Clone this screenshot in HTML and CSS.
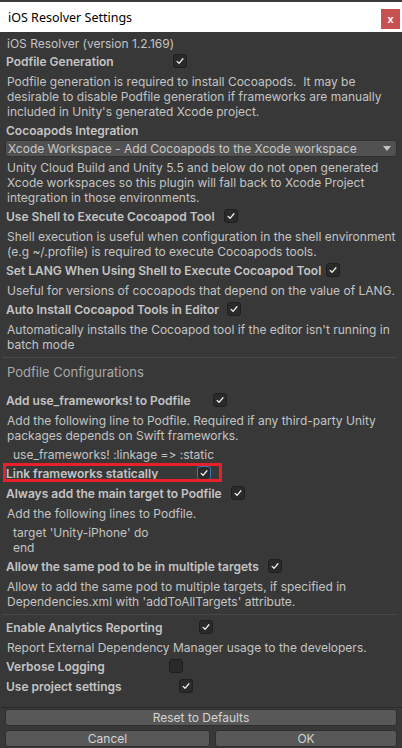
FILE: index.html
```html
<!DOCTYPE html>
<html>
<head>
<meta charset="utf-8">
<title>iOS Resolver Settings</title>
<link rel="stylesheet" href="styles.css">
</head>
<body>
<div class="window">
  <div class="topstrip"></div>
  <div class="titlebar">
    <span class="title">iOS Resolver Settings</span>
    <span class="close">x</span>
  </div>
  <div class="content">
    <div class="version">iOS Resolver (version 1.2.169)</div>

    <div class="toggle"><span class="label w-podgen">Podfile Generation</span><span class="cb on"><svg viewBox="0 0 14 14"><polyline points="3.6,7.4 5.9,9.7 10.4,4.4"/></svg></span></div>
    <div class="desc">Podfile generation is required to install Cocoapods.&nbsp; It may be<br>desirable to disable Podfile generation if frameworks are manually<br>included in Unity's generated Xcode project.</div>

    <div class="toggle"><span class="label">Cocoapods Integration</span></div>
    <div class="dropdown"><span>Xcode Workspace - Add Cocoapods to the Xcode workspace</span><span class="arrow"></span></div>
    <div class="desc">Unity Cloud Build and Unity 5.5 and below do not open generated<br>Xcode workspaces so this plugin will fall back to Xcode Project<br>integration in those environments.</div>

    <div class="toggle"><span class="label w-shell">Use Shell to Execute Cocoapod Tool</span><span class="cb on"><svg viewBox="0 0 14 14"><polyline points="3.6,7.4 5.9,9.7 10.4,4.4"/></svg></span></div>
    <div class="desc">Shell execution is useful when configuration in the shell environment<br>(e.g ~/.profile) is required to execute Cocoapods tools.</div>

    <div class="toggle"><span class="label w-lang">Set LANG When Using Shell to Execute Cocoapod Tool</span><span class="cb on"><svg viewBox="0 0 14 14"><polyline points="3.6,7.4 5.9,9.7 10.4,4.4"/></svg></span></div>
    <div class="desc">Useful for versions of cocoapods that depend on the value of LANG.</div>

    <div class="toggle"><span class="label w-auto">Auto Install Cocoapod Tools in Editor</span><span class="cb on"><svg viewBox="0 0 14 14"><polyline points="3.6,7.4 5.9,9.7 10.4,4.4"/></svg></span></div>
    <div class="desc">Automatically installs the Cocoapod tool if the editor isn't running in<br>batch mode</div>

    <div class="separator"></div>
    <div class="section-title">Podfile Configurations</div>

    <div class="toggle"><span class="label w-usefw">Add use_frameworks! to Podfile</span><span class="cb on"><svg viewBox="0 0 14 14"><polyline points="3.6,7.4 5.9,9.7 10.4,4.4"/></svg></span></div>
    <div class="desc">Add the following line to Podfile. Required if any third-party Unity<br>packages depends on Swift frameworks.</div>
    <div class="code">use_frameworks! :linkage =&gt; :static</div>

    <div class="toggle highlighted"><span class="label w-link">Link frameworks statically</span><span class="cb on focus"><svg viewBox="0 0 14 14"><polyline points="3.6,7.4 5.9,9.7 10.4,4.4"/></svg></span><span class="redbox"></span></div>

    <div class="toggle"><span class="label w-main">Always add the main target to Podfile</span><span class="cb on"><svg viewBox="0 0 14 14"><polyline points="3.6,7.4 5.9,9.7 10.4,4.4"/></svg></span></div>
    <div class="desc">Add the following lines to Podfile.</div>
    <div class="code">target 'Unity-iPhone' do<br>end</div>

    <div class="toggle"><span class="label w-multi">Allow the same pod to be in multiple targets</span><span class="cb on"><svg viewBox="0 0 14 14"><polyline points="3.6,7.4 5.9,9.7 10.4,4.4"/></svg></span></div>
    <div class="desc">Allow to add the same pod to multiple targets, if specified in<br>Dependencies.xml with 'addToAllTargets' attribute.</div>

    <div class="separator"></div>

    <div class="toggle"><span class="label w-analytics">Enable Analytics Reporting</span><span class="cb on"><svg viewBox="0 0 14 14"><polyline points="3.6,7.4 5.9,9.7 10.4,4.4"/></svg></span></div>
    <div class="desc">Report External Dependency Manager usage to the developers.</div>

    <div class="toggle"><span class="label w-verbose">Verbose Logging</span><span class="cb"></span></div>
    <div class="toggle"><span class="label w-project">Use project settings</span><span class="cb on"><svg viewBox="0 0 14 14"><polyline points="3.6,7.4 5.9,9.7 10.4,4.4"/></svg></span></div>
  </div>
  <div class="footer">
    <div class="btn">Reset to Defaults</div>
    <div class="btn-row">
      <div class="btn cancel">Cancel</div>
      <div class="btn ok">OK</div>
    </div>
  </div>
</div>
</body>
</html>
```

FILE: styles.css
```css
html, body {
  margin: 0;
  padding: 0;
}
body {
  width: 402px;
  height: 748px;
  overflow: hidden;
  background: #383838;
  font-family: Inter, "Noto Sans", sans-serif;
  font-size: 12px;
  color: #c4c4c4;
  font-variant-ligatures: none;
  font-feature-settings: "calt" 0, "liga" 0;
}
.window {
  display: flex;
  flex-direction: column;
  height: 748px;
}
.topstrip {
  height: 2px;
  background: #3c3c3c;
}
.titlebar {
  height: 30px;
  background: #ffffff;
  display: flex;
  align-items: center;
  justify-content: space-between;
  padding: 0 2px 0 8px;
}
.title {
  font-family: "Noto Sans", "Noto Sans CJK KR", sans-serif;
  font-size: 12.5px;
  color: #000;
}
.close {
  align-self: flex-start;
  margin-top: 7px;
  width: 19px;
  height: 20px;
  background: #c75050;
  color: #fff;
  font-family: "Liberation Sans", sans-serif;
  font-weight: bold;
  font-size: 11px;
  display: flex;
  align-items: center;
  justify-content: center;
}
.content {
  flex: 1;
  display: flex;
  flex-direction: column;
}
.version {
  padding: 4px 0 0 7px;
  line-height: 15px;
  height: 15px;
}
.toggle {
  position: relative;
  height: 20px;
  display: flex;
  align-items: center;
  padding-left: 6px;
}
.label {
  font-weight: 600;
  white-space: nowrap;
  flex: none;
}
.cb {
  flex: none;
  width: 12px;
  height: 12px;
  background: #2a2a2a;
  border: 1px solid #1e1e1e;
  border-radius: 3px;
  display: flex;
  align-items: center;
  justify-content: center;
}
.cb svg {
  width: 14px;
  height: 14px;
  fill: none;
  stroke: #eeeeee;
  stroke-width: 1.5;
  stroke-linecap: round;
  stroke-linejoin: round;
}
.cb.focus {
  border-color: #3a79bb;
}
.w-podgen { width: 167px; }
.w-shell { width: 218px; }
.w-lang { width: 320px; }
.w-auto { width: 221px; }
.w-usefw { width: 207px; }
.w-link { width: 191px; }
.w-main { width: 225px; }
.w-multi { width: 262px; }
.w-analytics { width: 193px; }
.w-verbose { width: 163px; }
.w-project { width: 173px; }
.redbox {
  position: absolute;
  left: 3px;
  top: 0;
  width: 213px;
  height: 13px;
  border: 3px solid #e8202a;
}
.desc {
  margin: 3px 0 1px;
  padding-left: 7px;
  line-height: 15px;
  white-space: nowrap;
}
.code {
  margin: 3px 0 1px;
  padding-left: 13px;
  line-height: 15px;
  white-space: nowrap;
}
.dropdown {
  margin: 0 5px;
  height: 15px;
  background: #515151;
  border: 1px solid #303030;
  border-radius: 3px;
  display: flex;
  align-items: center;
  justify-content: space-between;
  padding: 0 5px 0 2px;
  color: #c8c8c8;
}
.arrow {
  width: 0;
  height: 0;
  border-left: 4px solid transparent;
  border-right: 4px solid transparent;
  border-top: 5px solid #c4c4c4;
}
.separator {
  height: 1px;
  background: #484848;
  margin: 4px 5px 2px 2px;
}
.section-title {
  height: 20px;
  line-height: 20px;
  margin: 2px 0 8px;
  padding-left: 7px;
  font-size: 13px;
  color: #a9a9a9;
}
.footer {
  border-top: 1px solid #2c2c2c;
  padding: 1px 5px 1px;
  display: flex;
  flex-direction: column;
  gap: 4px;
}
.btn {
  height: 15px;
  background: #585858;
  border: 1px solid #2f2f2f;
  border-radius: 3px;
  display: flex;
  align-items: center;
  justify-content: center;
  color: #d4d4d4;
}
.btn-row {
  display: flex;
  gap: 5px;
}
.cancel {
  width: 203px;
}
.ok {
  flex: 1;
}
```
